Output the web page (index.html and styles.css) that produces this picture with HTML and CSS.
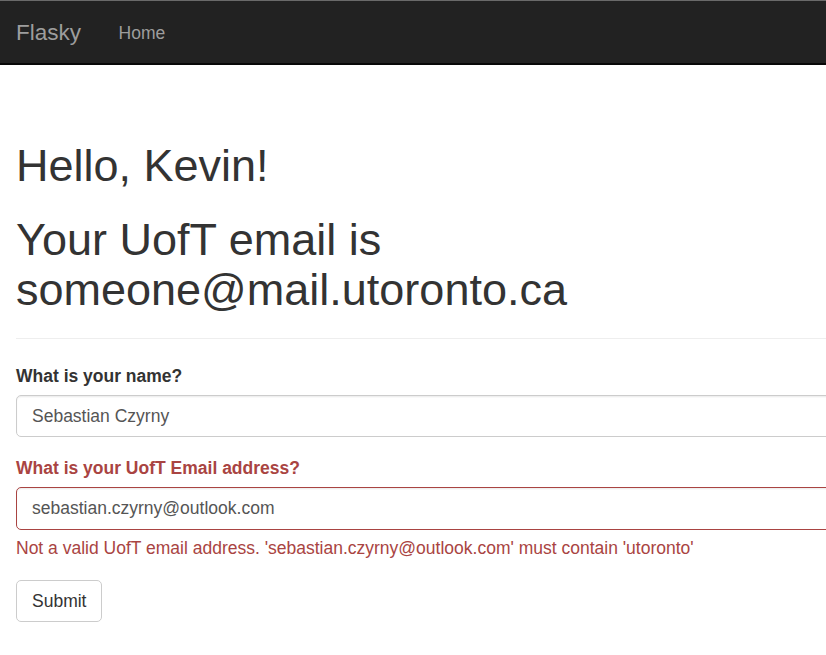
FILE: index.html
```html
<!DOCTYPE html>
<html lang="en">
<head>
<meta charset="utf-8">
<title>Flasky</title>
<link rel="stylesheet" href="styles.css">
</head>
<body>
<nav class="navbar">
  <div class="container nav-inner">
    <a class="brand" href="#">Flasky</a>
    <a class="nav-link" href="#">Home</a>
  </div>
</nav>
<main class="container main">
  <div class="page-header">
    <h1>Hello, Kevin!</h1>
    <h1>Your UofT email is someone@mail.utoronto.ca</h1>
  </div>
  <form class="form">
    <div class="form-group">
      <label class="label" for="name">What is your name?</label>
      <input class="form-control" id="name" type="text" value="Sebastian Czyrny">
    </div>
    <div class="form-group has-error">
      <label class="label" for="email">What is your UofT Email address?</label>
      <input class="form-control" id="email" type="text" value="sebastian.czyrny@outlook.com">
      <span class="help-block">Not a valid UofT email address. 'sebastian.czyrny@outlook.com' must contain 'utoronto'</span>
    </div>
    <button class="btn" type="button">Submit</button>
  </form>
</main>
</body>
</html>
```
FILE: styles.css
```css
html {
  overflow: hidden;
}
body {
  margin: 0;
  font-family: "Liberation Sans", Arial, Helvetica, sans-serif;
  font-size: 17.5px;
  line-height: 1.42857;
  color: #333;
  background: #fff;
}
.container {
  width: 900px;
  padding: 0 16px;
  box-sizing: border-box;
}
.main {
  padding-top: 25.5px;
}
.navbar {
  background: #222;
  border-top: 1px solid #6a6a6a;
  border-bottom: 2px solid #080808;
  height: 62px;
}
.nav-inner {
  display: flex;
  align-items: stretch;
  height: 100%;
}
.brand {
  font-size: 22.5px;
  line-height: 25px;
  padding: 19px 18.75px 18px 0;
  color: #9d9d9d;
  text-decoration: none;
}
.nav-link {
  font-size: 17.5px;
  line-height: 25px;
  padding: 20px 18.75px 17px;
  color: #9d9d9d;
  text-decoration: none;
}
.page-header {
  margin: 50px 0 25px;
  padding-bottom: 11.25px;
  border-bottom: 1.25px solid #eee;
}
h1 {
  font-size: 45px;
  font-weight: 500;
  line-height: 1.1;
  margin: 25px 0 12.5px;
}
.page-header h1:first-child {
  margin-top: 0;
}
.form-group {
  margin-bottom: 18.75px;
}
.label {
  display: block;
  font-weight: 700;
  margin-bottom: 6.25px;
}
.form-control {
  display: block;
  width: 100%;
  height: 42.5px;
  box-sizing: border-box;
  padding: 7.5px 15px;
  font-family: inherit;
  font-size: 17.5px;
  line-height: 1.42857;
  color: #555;
  background: #fff;
  border: 1.25px solid #ccc;
  border-radius: 5px;
  box-shadow: inset 0 1.25px 1.25px rgba(0,0,0,.075);
  outline: none;
}
.has-error .label,
.has-error .help-block {
  color: #a94442;
}
.has-error .form-control {
  border-color: #a94442;
}
.help-block {
  display: block;
  margin-top: 6.25px;
  margin-bottom: 12.5px;
}
.btn {
  display: block;
  height: 42.5px;
  padding: 7.5px 15px;
  font-family: inherit;
  font-size: 17.5px;
  line-height: 1.42857;
  color: #333;
  background: #fff;
  border: 1.25px solid #ccc;
  border-radius: 5px;
}
```
